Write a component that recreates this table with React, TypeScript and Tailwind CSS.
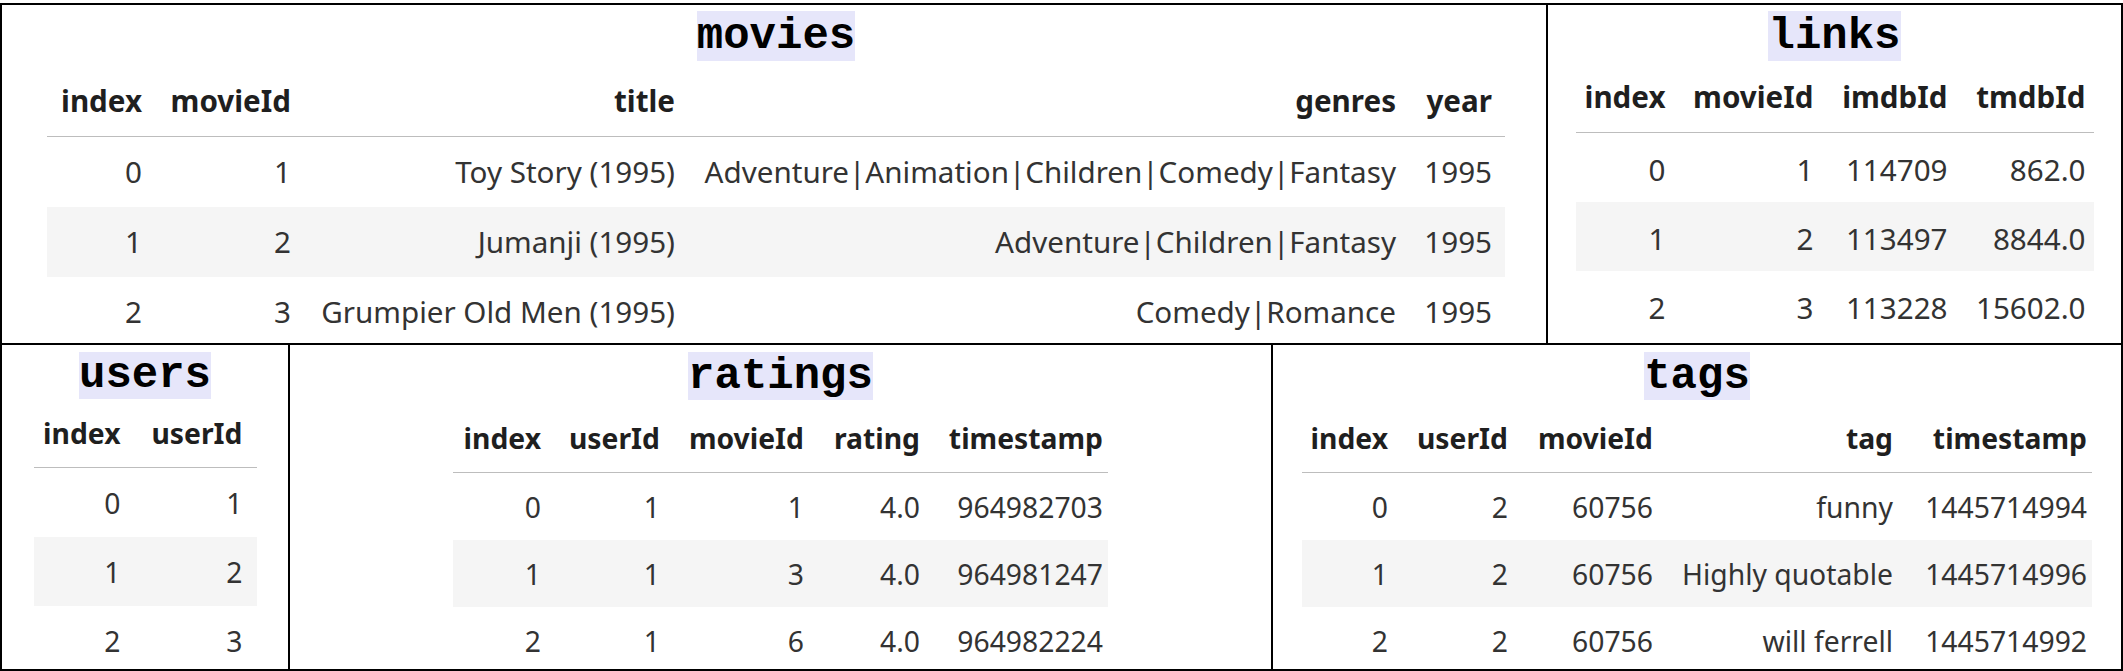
import React from 'react';

type Col = { label: string; cls: string };
type Frame = {
  title: string;
  cap: string;
  text: string;
  line: string;
  headH: string;
  rowH: string;
  cols: Col[];
  rows: (string | number)[][];
};

const movies: Frame = {
  title: 'movies',
  cap: 'h-[50px] leading-[50px]',
  text: 'text-[29.6px]',
  line: 'leading-[40px]',
  headH: 'h-[76px]',
  rowH: 'h-[70px]',
  cols: [
    { label: 'index', cls: 'w-[110px] pr-[15px]' },
    { label: 'movieId', cls: 'w-[149px] pr-[15px]' },
    { label: 'title', cls: 'w-[384px] pr-[15px]' },
    { label: 'genres', cls: 'w-[721px] pr-[15px]' },
    { label: 'year', cls: 'w-[94px] pr-[13px]' },
  ],
  rows: [
    [0, 1, 'Toy Story (1995)', 'Adventure|Animation|Children|Comedy|Fantasy', 1995],
    [1, 2, 'Jumanji (1995)', 'Adventure|Children|Fantasy', 1995],
    [2, 3, 'Grumpier Old Men (1995)', 'Comedy|Romance', 1995],
  ],
};

const links: Frame = {
  title: 'links',
  cap: 'h-[50px] leading-[50px]',
  text: 'text-[29.6px]',
  line: 'leading-[40px]',
  headH: 'h-[72px]',
  rowH: 'h-[69px] pt-[5px]',
  cols: [
    { label: 'index', cls: 'w-[106px] pr-[16px]' },
    { label: 'movieId', cls: 'w-[149px] pr-[17px]' },
    { label: 'imdbId', cls: 'w-[133px] pr-[16px]' },
    { label: 'tmdbId', cls: 'w-[130px] pr-[8px]' },
  ],
  rows: [
    [0, 1, 114709, '862.0'],
    [1, 2, 113497, '8844.0'],
    [2, 3, 113228, '15602.0'],
  ],
};

const users: Frame = {
  title: 'users',
  cap: 'h-[47px] leading-[47px]',
  text: 'text-[28.3px]',
  line: 'leading-[38px]',
  headH: 'h-[69px]',
  rowH: 'h-[69px]',
  cols: [
    { label: 'index', cls: 'w-[102px] pr-[15px]' },
    { label: 'userId', cls: 'w-[121px] pr-[14px]' },
  ],
  rows: [
    [0, 1],
    [1, 2],
    [2, 3],
  ],
};

const ratings: Frame = {
  title: 'ratings',
  cap: 'h-[48px] leading-[48px]',
  text: 'text-[28.3px]',
  line: 'leading-[38px]',
  headH: 'h-[73px]',
  rowH: 'h-[67px]',
  cols: [
    { label: 'index', cls: 'w-[102px] pr-[14px]' },
    { label: 'userId', cls: 'w-[120px] pr-[15px]' },
    { label: 'movieId', cls: 'w-[144px] pr-[15px]' },
    { label: 'rating', cls: 'w-[116px] pr-[15px]' },
    { label: 'timestamp', cls: 'w-[173px] pr-[5px]' },
  ],
  rows: [
    [0, 1, 1, '4.0', 964982703],
    [1, 1, 3, '4.0', 964981247],
    [2, 1, 6, '4.0', 964982224],
  ],
};

const tags: Frame = {
  title: 'tags',
  cap: 'h-[48px] leading-[48px]',
  text: 'text-[28.3px]',
  line: 'leading-[38px]',
  headH: 'h-[73px]',
  rowH: 'h-[67px]',
  cols: [
    { label: 'index', cls: 'w-[101px] pr-[15px]' },
    { label: 'userId', cls: 'w-[120px] pr-[15px]' },
    { label: 'movieId', cls: 'w-[145px] pr-[15px]' },
    { label: 'tag', cls: 'w-[244px] pr-[19px]' },
    { label: 'timestamp', cls: 'w-[180px] pr-[5px]' },
  ],
  rows: [
    [0, 2, 60756, 'funny', 1445714994],
    [1, 2, 60756, 'Highly quotable', 1445714996],
    [2, 2, 60756, 'will ferrell', 1445714992],
  ],
};

function Frame({ t, top }: { t: Frame; top: string }) {
  return (
    <div className={`flex flex-col items-center self-start font-['Noto_Sans',sans-serif] ${t.text} ${top}`}>
      <div className={`shrink-0 font-['Liberation_Mono',monospace] text-[44px] font-bold text-black whitespace-pre ${t.cap}`}>
        <span className={`inline-block bg-[#e6e6fa] ${t.cap}`}>{t.title}</span>
      </div>
      <div className={`shrink-0 flex items-end border-b border-[#bdbdbd] font-bold text-[#1f1f1f] ${t.headH}`}>
        {t.cols.map((c) => (
          <div key={c.label} className={`shrink-0 text-right whitespace-nowrap pb-[15px] ${t.line} ${c.cls}`}>
            {c.label}
          </div>
        ))}
      </div>
      {t.rows.map((r, i) => (
        <div key={i} className={`shrink-0 flex items-center text-[#333] ${t.rowH} ${i % 2 === 1 ? 'bg-[#f5f5f5]' : ''}`}>
          {r.map((v, j) => (
            <div key={j} className={`shrink-0 text-right whitespace-nowrap ${t.line} ${t.cols[j].cls}`}>
              {v}
            </div>
          ))}
        </div>
      ))}
    </div>
  );
}

export default function App() {
  return (
    <div className="bg-white pt-[3px] w-[2123px] h-[671px] overflow-hidden">
      <div className="w-[2123px] h-[668px] border-2 border-black flex flex-col">
        <div className="flex h-[340px] shrink-0 border-b-2 border-black">
          <div className="w-[1546px] shrink-0 border-r-2 border-black flex justify-center overflow-hidden pl-[4px]">
            <Frame t={movies} top="pt-[6px]" />
          </div>
          <div className="flex-1 flex justify-center overflow-hidden">
            <Frame t={links} top="pt-[6px]" />
          </div>
        </div>
        <div className="flex flex-1 min-h-0">
          <div className="w-[288px] shrink-0 border-r-2 border-black flex justify-center overflow-hidden">
            <Frame t={users} top="pt-[7px]" />
          </div>
          <div className="w-[983px] shrink-0 border-r-2 border-black flex justify-center overflow-hidden">
            <Frame t={ratings} top="pt-[7px]" />
          </div>
          <div className="flex-1 flex justify-center overflow-hidden">
            <Frame t={tags} top="pt-[7px]" />
          </div>
        </div>
      </div>
    </div>
  );
}
